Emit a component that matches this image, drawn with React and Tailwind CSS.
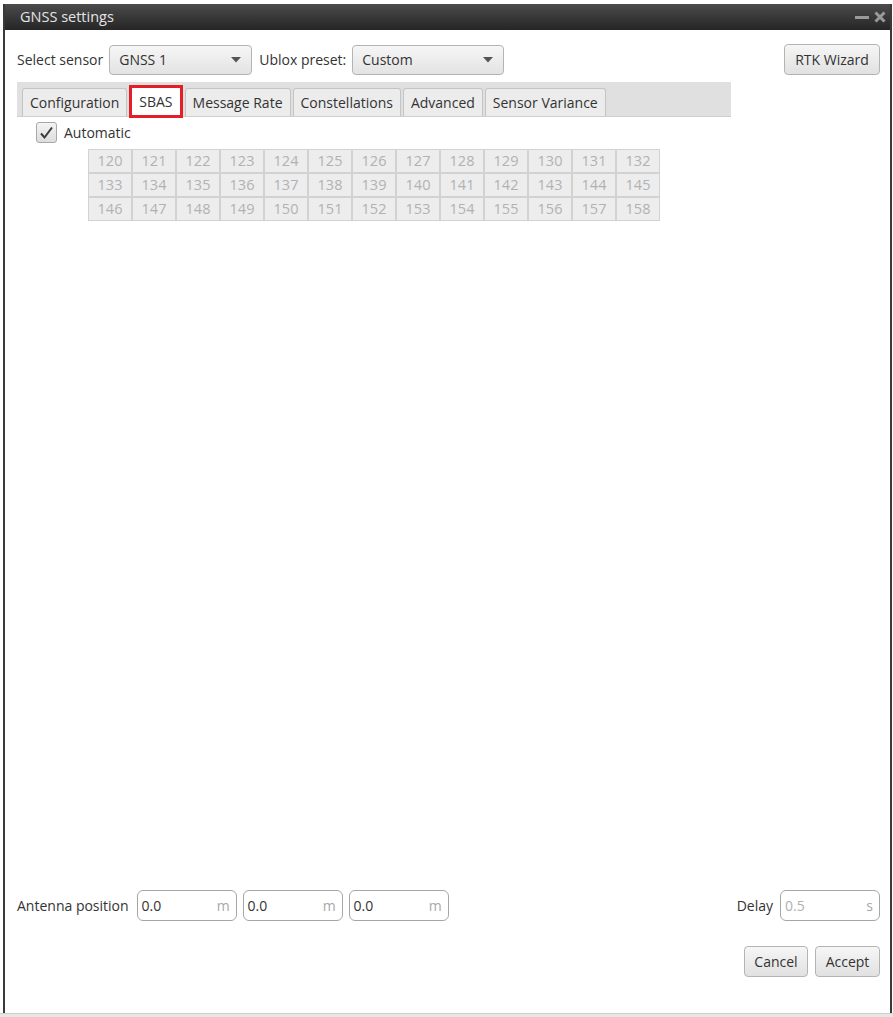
import React from 'react';

const font = { fontFamily: '"Open Sans", "Noto Sans", sans-serif' };

const TABS = ['Configuration', 'SBAS', 'Message Rate', 'Constellations', 'Advanced', 'Sensor Variance'];

const PRNS = Array.from({ length: 39 }, (_, i) => 120 + i);

const Caret = () => (
  <svg width="10" height="6" viewBox="0 0 10 6" className="shrink-0">
    <path d="M0 0 L10 0 L5 5.5 Z" fill="#555" />
  </svg>
);

const Select = ({ value, width }) => (
  <div
    className={`${width} h-[30px] flex items-center justify-between pl-[9px] pr-[10px] rounded-[4px] border border-[#b4b4b4] bg-gradient-to-b from-[#f6f6f6] to-[#e3e3e3] text-[#333] text-[14px]`}
  >
    <span>{value}</span>
    <Caret />
  </div>
);

const Button = ({ children, className = '' }) => (
  <div
    className={`h-[31px] flex items-center justify-center rounded-[4px] border border-[#b4b4b4] bg-gradient-to-b from-[#f6f6f6] to-[#e1e1e1] text-[#333] text-[14px] ${className}`}
  >
    {children}
  </div>
);

const UnitInput = ({ value, unit, muted }) => (
  <div className="w-[100px] h-[31px] flex items-center justify-between pl-[4px] pr-[6px] rounded-[6px] border border-[#a6a6a6] bg-white text-[14px]">
    <span className={muted ? 'text-[#b0b0b0]' : 'text-[#333]'}>{value}</span>
    <span className="text-[#a8a8a8]">{unit}</span>
  </div>
);

export default function App() {
  return (
    <div className="w-[893px] h-[1017px] bg-white flex flex-col" style={font}>
      <div className="h-[4px] bg-white" />
      <div className="ml-[3px] w-[889px] h-[1009px] flex flex-col border-l-2 border-r-2 border-[#3a3a3a]">
        {/* title bar */}
        <div className="h-[26px] shrink-0 flex items-center justify-between pl-[15px] pr-[4px] bg-gradient-to-b from-[#4b4b4b] to-[#262626]">
          <span className="text-[#e4e4e4] text-[14.5px]">GNSS settings</span>
          <div className="flex items-center gap-[5px]">
            <svg width="14" height="14" viewBox="0 0 14 14">
              <rect x="0" y="6" width="14" height="3" fill="#9a9a9a" />
            </svg>
            <svg width="12" height="12" viewBox="0 0 12 12">
              <path d="M1.5 1.5 L10.5 10.5 M10.5 1.5 L1.5 10.5" stroke="#9a9a9a" strokeWidth="3" />
            </svg>
          </div>
        </div>

        {/* body */}
        <div className="flex-1 flex flex-col pl-[12px] pr-[10px] pt-[14px] pb-[36px]">
          <div className="flex items-center">
            <span className="text-[#333] text-[14px] mr-[6px]">Select sensor</span>
            <Select value="GNSS 1" width="w-[143px]" />
            <span className="text-[#333] text-[14px] ml-[7px] mr-[6px]">Ublox preset:</span>
            <Select value="Custom" width="w-[152px]" />
            <div className="flex-1" />
            <Button className="w-[96px]">RTK Wizard</Button>
          </div>

          <div className="mt-[7px] w-[714px] h-[35px] bg-[#e0e0e0] border-b border-[#cfcfcf] flex items-end pl-[5px] gap-[2px]">
            {TABS.map((t) => {
              const active = t === 'SBAS';
              return (
                <div
                  key={t}
                  className={
                    active
                      ? 'h-[33px] -mb-[2px] px-[7px] flex items-center bg-white border-[3px] border-[#e51d26] text-[#333] text-[14px]'
                      : 'h-[28px] px-[7px] flex items-center rounded-t-[3px] border border-b-0 border-[#c4c4c4] bg-[#ececec] text-[#333] text-[14px]'
                  }
                >
                  {t}
                </div>
              );
            })}
          </div>

          <div className="mt-[5px] ml-[19px] flex items-center gap-[7px]">
            <div className="w-[21px] h-[21px] rounded-[3px] border border-[#a8a8a8] bg-gradient-to-b from-[#f4f4f4] to-[#dddddd] flex items-center justify-center">
              <svg width="15" height="14" viewBox="0 0 15 14">
                <path d="M2 7.5 L5.5 11.5 L13 1.5" fill="none" stroke="#3a3a3a" strokeWidth="2" />
              </svg>
            </div>
            <span className="text-[#333] text-[14px]">Automatic</span>
          </div>

          <div className="mt-[6px] ml-[71px] w-[572px] p-[1px] bg-[#d2d2d2] grid grid-cols-[repeat(13,42px)] auto-rows-[22px] gap-[2px]">
            {PRNS.map((n) => (
              <div key={n} className="bg-[#ededed] flex items-center justify-center text-[#b2b2b2] text-[14.5px]">
                {n}
              </div>
            ))}
          </div>

          <div className="flex-1" />

          <div className="flex items-center">
            <span className="text-[#333] text-[14px] mr-[8px]">Antenna position</span>
            <div className="flex gap-[6px]">
              <UnitInput value="0.0" unit="m" />
              <UnitInput value="0.0" unit="m" />
              <UnitInput value="0.0" unit="m" />
            </div>
            <div className="flex-1" />
            <span className="text-[#333] text-[14px] mr-[7px]">Delay</span>
            <UnitInput value="0.5" unit="s" muted />
          </div>

          <div className="mt-[25px] flex justify-end gap-[7px]">
            <Button className="w-[64px]">Cancel</Button>
            <Button className="w-[65px]">Accept</Button>
          </div>
        </div>
      </div>
      <div className="flex-1 bg-[#e6e6e6] border-t border-[#d0d0d0]" />
    </div>
  );
}
